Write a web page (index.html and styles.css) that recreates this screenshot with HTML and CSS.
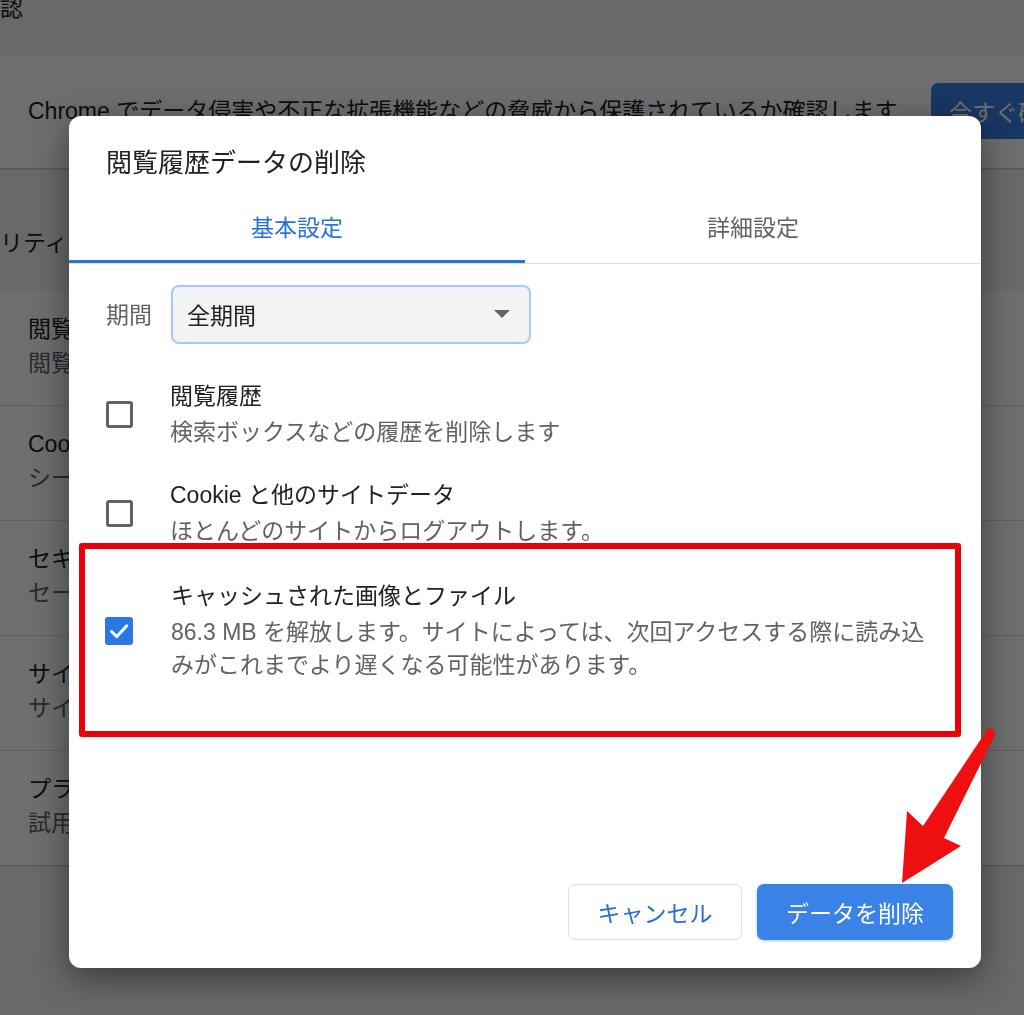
FILE: index.html
```html
<!DOCTYPE html>
<html lang="ja">
<head>
<meta charset="utf-8">
<title>閲覧履歴データの削除</title>
<link rel="stylesheet" href="styles.css">
</head>
<body>
<div class="page">
  <div class="page-inner">
    <h2 class="sec-title sec-title-top">安全確認</h2>
    <section class="card card-safety">
      <div class="safety-row">
        <span class="safety-text">Chrome でデータ侵害や不正な拡張機能などの脅威から保護されているか確認します</span>
        <button class="btn-check">今すぐ確認</button>
      </div>
    </section>
    <h2 class="sec-title">セキュリティ</h2>
    <section class="card">
      <div class="set-row first">
        <div class="set-title">閲覧履歴データの削除</div>
        <div class="set-sub">閲覧履歴、Cookie、キャッシュなどを削除します</div>
      </div>
      <div class="set-row">
        <div class="set-title">Cookie と他のサイトデータ</div>
        <div class="set-sub">シークレット モードでサードパーティの Cookie がブロックされています</div>
      </div>
      <div class="set-row">
        <div class="set-title">セキュリティ</div>
        <div class="set-sub">セーフ ブラウジング（危険なサイトからの保護）などのセキュリティ設定</div>
      </div>
      <div class="set-row">
        <div class="set-title">サイトの設定</div>
        <div class="set-sub">サイトが使用、表示できる情報（位置情報、カメラ、ポップアップなど）を制御します</div>
      </div>
      <div class="set-row">
        <div class="set-title">プライバシー サンドボックス</div>
        <div class="set-sub">試用版の機能は有効になっています</div>
      </div>
    </section>
  </div>
</div>

<div class="scrim"></div>

<div class="dialog" role="dialog">
  <div class="dlg-title">閲覧履歴データの削除</div>
  <div class="tabs">
    <div class="tab active">基本設定</div>
    <div class="tab">詳細設定</div>
  </div>
  <div class="dlg-body">
    <div class="period">
      <span class="period-label">期間</span>
      <div class="select">
        <span>全期間</span>
        <span class="select-arrow"></span>
      </div>
    </div>
    <div class="opt">
      <span class="cb"></span>
      <div class="opt-text">
        <div class="opt-title">閲覧履歴</div>
        <div class="opt-sub">検索ボックスなどの履歴を削除します</div>
      </div>
    </div>
    <div class="opt">
      <span class="cb"></span>
      <div class="opt-text">
        <div class="opt-title">Cookie と他のサイトデータ</div>
        <div class="opt-sub">ほとんどのサイトからログアウトします。</div>
      </div>
    </div>
    <div class="opt">
      <span class="cb checked">
        <svg viewBox="0 0 28 28" width="28" height="28"><path d="M6.5 14.5 L11.8 19.6 L21.8 8.8" fill="none" stroke="#fff" stroke-width="3" stroke-linecap="round" stroke-linejoin="round"/></svg>
      </span>
      <div class="opt-text">
        <div class="opt-title">キャッシュされた画像とファイル</div>
        <div class="opt-sub">86.3 MB を解放します。サイトによっては、次回アクセスする際に読み込みがこれまでより遅くなる可能性があります。</div>
      </div>
    </div>
  </div>
  <div class="dlg-footer">
    <button class="btn btn-cancel">キャンセル</button>
    <button class="btn btn-primary">データを削除</button>
  </div>
  <div class="highlight"></div>
</div>

<svg class="arrow" width="1024" height="1015" viewBox="0 0 1024 1015">
  <polygon points="989,727 996,733 944,838 961,846 902,883 907,811 923,826" fill="#ee1010"/>
</svg>
</body>
</html>
```
FILE: styles.css
```css
html, body {
  margin: 0;
  padding: 0;
  width: 1024px;
  height: 1015px;
  overflow: hidden;
}

body {
  background: #f1f3f4;
  font-family: "Liberation Sans", "Noto Sans CJK JP", sans-serif;
  color: #202124;
  position: relative;
}

.page {
  height: 1015px;
}

.page-inner {
  margin-left: -69px;
  margin-top: -9px;
  width: 1179px;
}

.sec-title {
  margin: 58px 0 0;
  font-size: 23px;
  line-height: 34px;
  font-weight: 400;
  color: #202124;
}

.sec-title-top {
  margin-top: 0;
}

.card {
  background: #fff;
  margin-top: 30px;
  box-shadow: 0 1px 2px rgba(60, 64, 67, 0.3);
}

.card-safety {
  margin-top: 30px;
  padding: 28px 28px 29px 97px;
}

.safety-row {
  display: flex;
  align-items: center;
  justify-content: space-between;
}

.safety-text {
  font-size: 23px;
  line-height: 34px;
  white-space: nowrap;
}

.btn-check {
  font-family: inherit;
  font-size: 23px;
  color: #fff;
  background: #3a7fe6;
  border: none;
  border-radius: 7px;
  height: 56px;
  width: 151px;
  padding: 0;
}

.set-row {
  padding: 21px 0 25px 97px;
  border-top: 1px solid #dadce0;
}

.set-row.first {
  border-top: none;
  padding-top: 22px;
}

.set-title {
  font-size: 23px;
  line-height: 34px;
  white-space: nowrap;
}

.set-sub {
  font-size: 23px;
  line-height: 34px;
  color: #5f6368;
  white-space: nowrap;
}

.scrim {
  position: fixed;
  inset: 0;
  background: rgba(0, 0, 0, 0.57);
}

.dialog {
  position: absolute;
  left: 69px;
  top: 116px;
  width: 912px;
  height: 852px;
  background: #fff;
  border-radius: 12px;
  box-shadow: 0 10px 34px rgba(0, 0, 0, 0.45);
  display: flex;
  flex-direction: column;
  font-family: "Liberation Sans", "Noto Sans CJK JP", sans-serif;
}

.dlg-title {
  padding: 30px 37px 0;
  font-size: 26px;
  line-height: 34px;
  color: #202124;
}

.tabs {
  display: flex;
  border-bottom: 1px solid #dadce0;
}

.tab {
  flex: 1;
  height: 83px;
  box-sizing: border-box;
  padding-top: 31px;
  text-align: center;
  font-size: 23px;
  line-height: 34px;
  color: #5f6368;
  border-bottom: 3px solid transparent;
}

.tab.active {
  color: #2a72d4;
  border-bottom-color: #2a72d4;
}

.dlg-body {
  padding: 21px 37px 0;
}

.period {
  display: flex;
  align-items: center;
  gap: 19px;
}

.period-label {
  font-size: 23px;
  line-height: 34px;
  color: #5f6368;
}

.select {
  width: 360px;
  height: 59px;
  box-sizing: border-box;
  background: #f1f3f4;
  border: 2px solid #aac6f2;
  border-radius: 8px;
  display: flex;
  align-items: center;
  justify-content: space-between;
  padding: 0 19px 2px 14px;
  font-size: 23px;
  color: #202124;
}

.select-arrow {
  width: 0;
  height: 0;
  border-left: 8px solid transparent;
  border-right: 8px solid transparent;
  border-top: 8px solid #5f6368;
}

.opt {
  display: flex;
  align-items: center;
  gap: 37px;
  margin-top: 35px;
}

.opt + .opt {
  margin-top: 29px;
}

.opt + .opt + .opt {
  margin-top: 31px;
}

.cb {
  flex: none;
  width: 27px;
  height: 27px;
  box-sizing: border-box;
  border: 3px solid #5f6368;
  border-radius: 3px;
}

.cb.checked {
  width: 28px;
  height: 28px;
  border: none;
  background: #2a78e4;
  margin-left: -1px;
  margin-right: 1px;
}

.cb.checked svg {
  display: block;
}

.opt-text {
  max-width: 774px;
}

.opt-title {
  font-size: 23px;
  line-height: 34px;
  color: #202124;
}

.opt-sub {
  margin-top: 3px;
  font-size: 23px;
  line-height: 33px;
  color: #5f6368;
}

.dlg-footer {
  margin-top: auto;
  display: flex;
  justify-content: flex-end;
  gap: 15px;
  padding: 0 28px 28px;
}

.btn {
  font-family: inherit;
  font-size: 23px;
  height: 56px;
  border-radius: 7px;
  padding: 0;
}

.btn-cancel {
  width: 174px;
  background: #fff;
  color: #2a6fcf;
  border: 1px solid #dadce0;
}

.btn-primary {
  width: 196px;
  background: #3b82e6;
  color: #fff;
  border: none;
  box-shadow: 0 1px 3px rgba(59, 130, 230, 0.45);
}

.highlight {
  position: absolute;
  left: 10px;
  top: 427px;
  width: 882px;
  height: 194px;
  box-sizing: border-box;
  border: 6px solid #e8000b;
  border-radius: 3px;
  pointer-events: none;
}

.arrow {
  position: absolute;
  left: 0;
  top: 0;
  pointer-events: none;
}
```
